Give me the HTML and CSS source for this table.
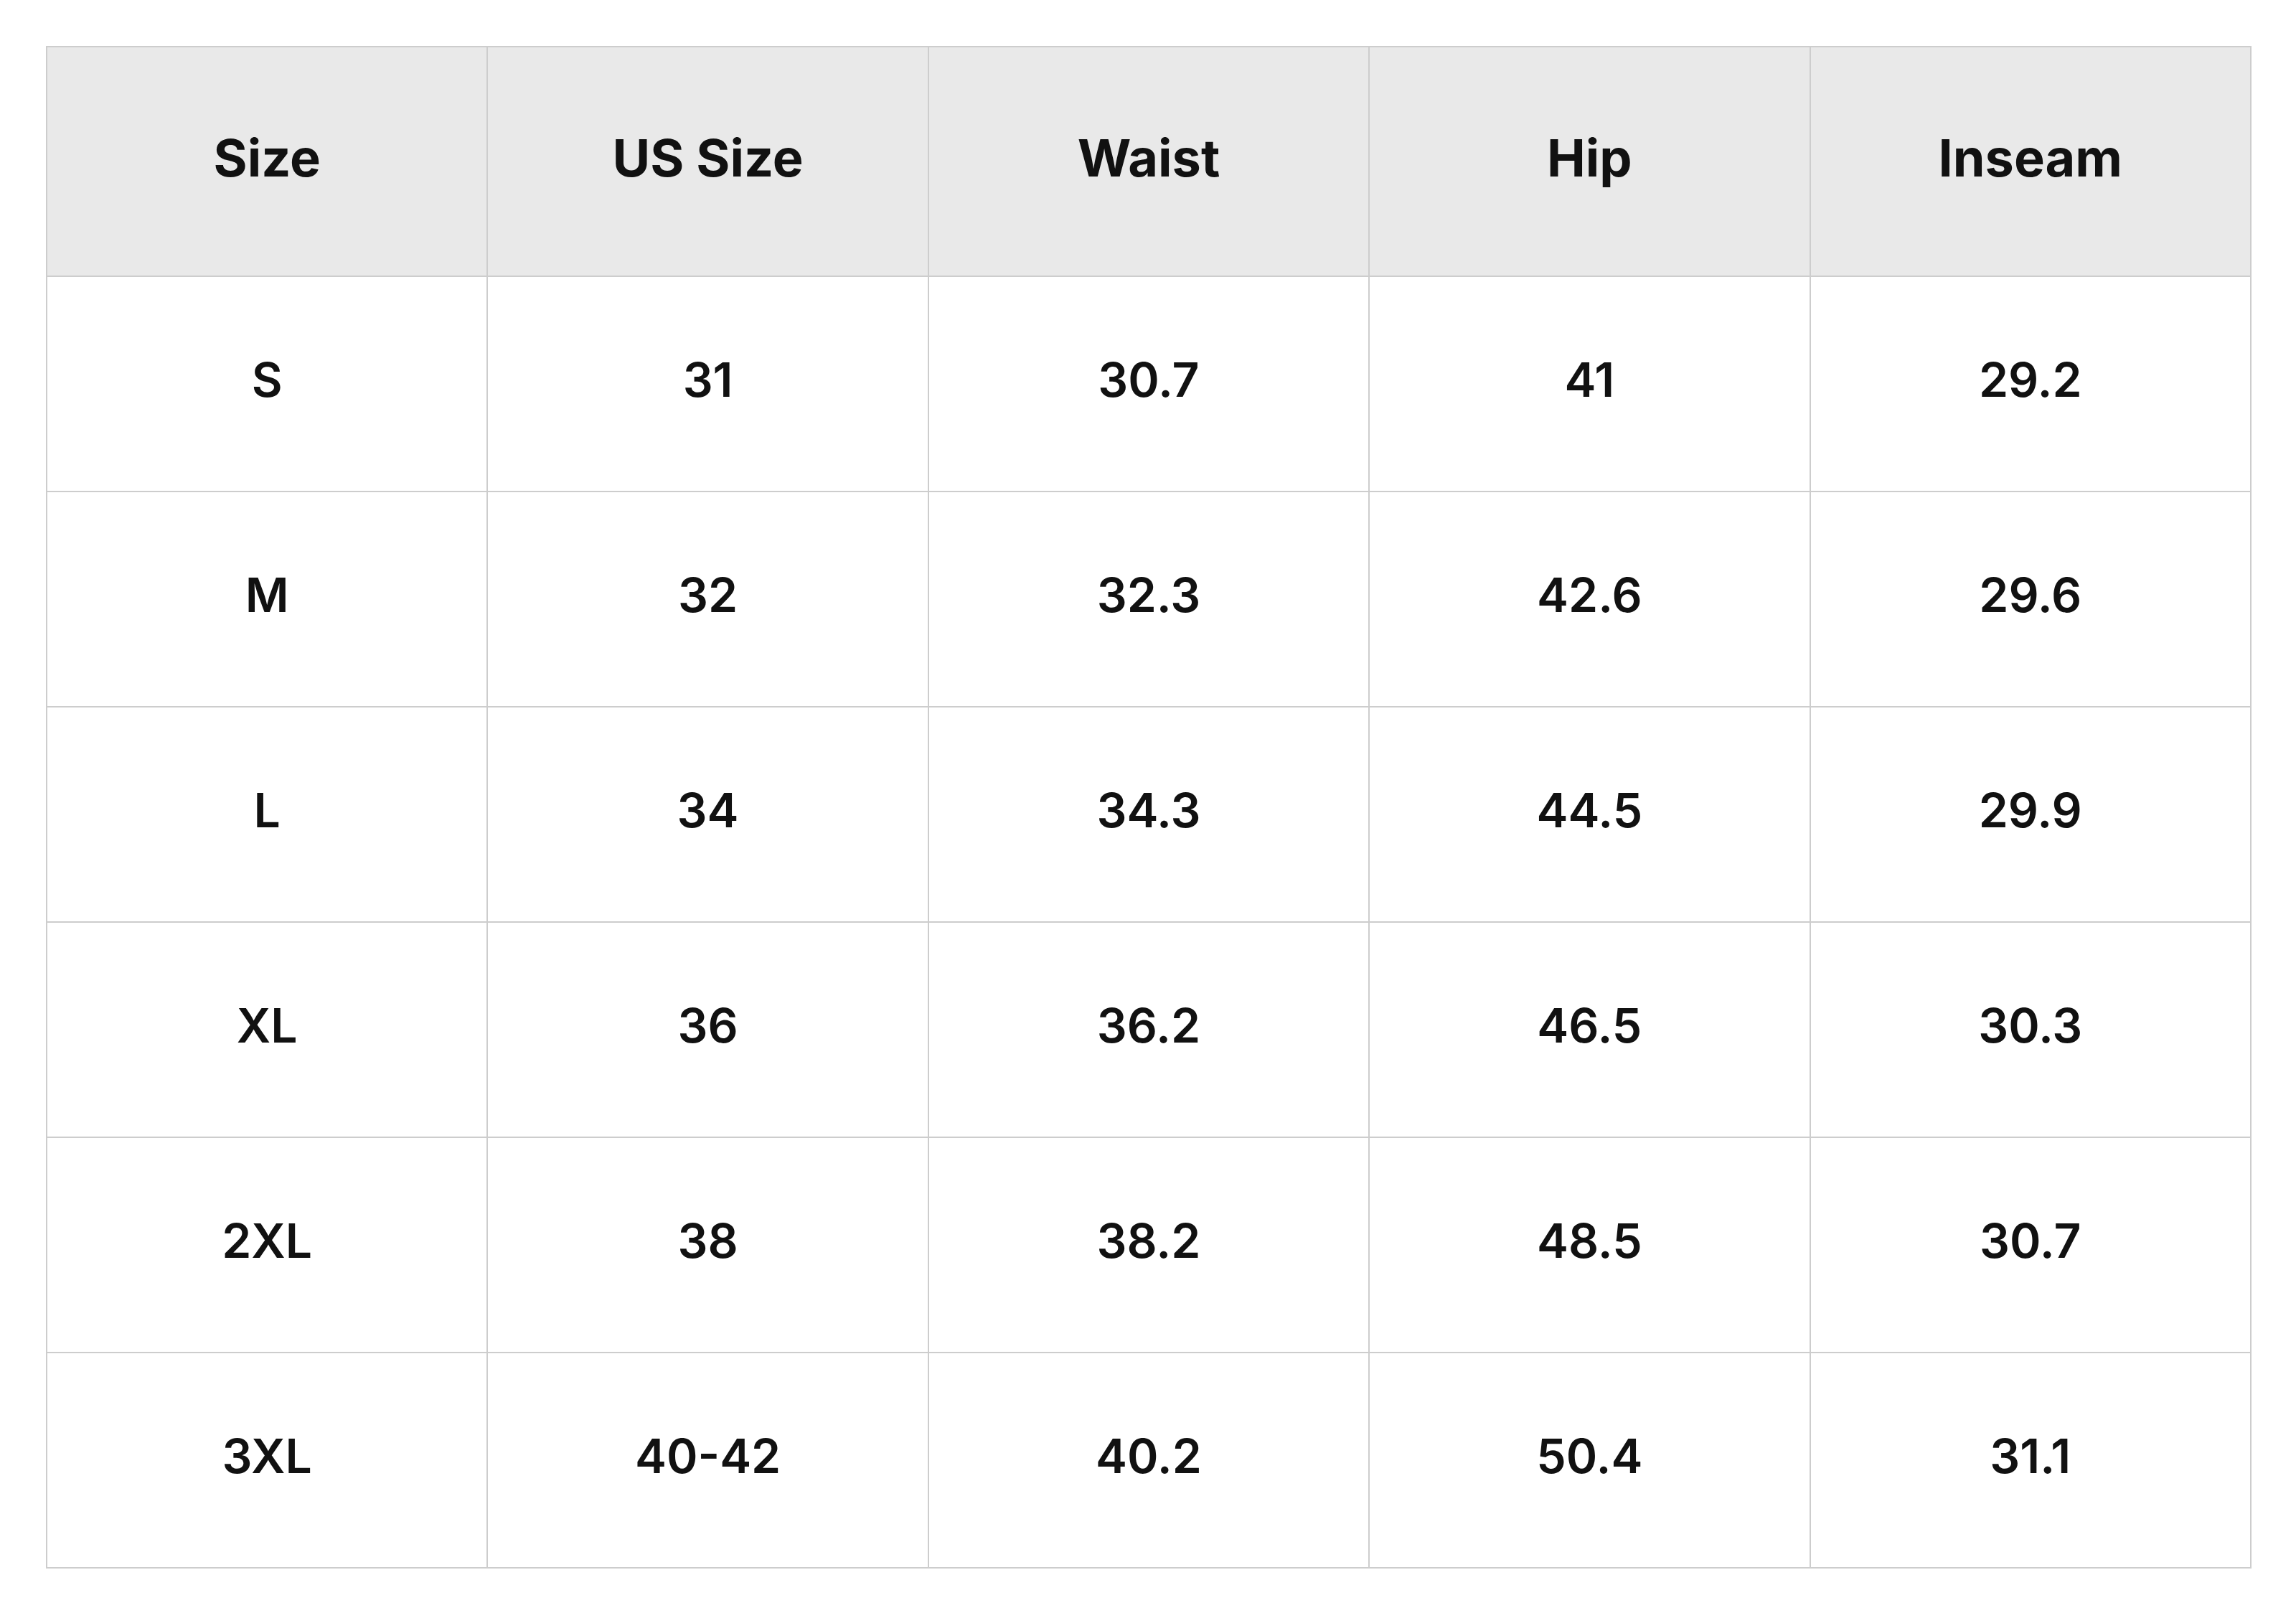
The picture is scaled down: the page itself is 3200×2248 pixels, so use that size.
FILE: index.html
```html
<!DOCTYPE html>
<html>
<head>
<meta charset="utf-8">
<link rel="stylesheet" href="styles.css">
</head>
<body>
<div class="wrap">
<table class="chart">
<thead>
<tr><th>Size</th><th>US Size</th><th>Waist</th><th>Hip</th><th>Inseam</th></tr>
</thead>
<tbody>
<tr><td>S</td><td>31</td><td>30.7</td><td>41</td><td>29.2</td></tr>
<tr><td>M</td><td>32</td><td>32.3</td><td>42.6</td><td>29.6</td></tr>
<tr><td>L</td><td>34</td><td>34.3</td><td>44.5</td><td>29.9</td></tr>
<tr><td>XL</td><td>36</td><td>36.2</td><td>46.5</td><td>30.3</td></tr>
<tr><td>2XL</td><td>38</td><td>38.2</td><td>48.5</td><td>30.7</td></tr>
<tr><td>3XL</td><td>40-42</td><td>40.2</td><td>50.4</td><td>31.1</td></tr>
</tbody>
</table>
</div>
</body>
</html>
```

FILE: styles.css
```css
html, body {
  margin: 0;
  padding: 0;
  background: #ffffff;
}
.wrap {
  padding: 64px 0 0 64px;
}
.chart {
  width: 3074px;
  table-layout: fixed;
  border-collapse: collapse;
  font-family: Inter, "Liberation Sans", sans-serif;
  color: #111111;
}
.chart th,
.chart td {
  border: 2px solid #cdcdcd;
  text-align: center;
  vertical-align: middle;
  padding: 0 0 12px 0;
}
.chart th {
  background: #e9e9e9;
  font-size: 72px;
  font-weight: 700;
  height: 306px;
}
.chart td {
  font-size: 66px;
  font-weight: 600;
  height: 286px;
}
```
